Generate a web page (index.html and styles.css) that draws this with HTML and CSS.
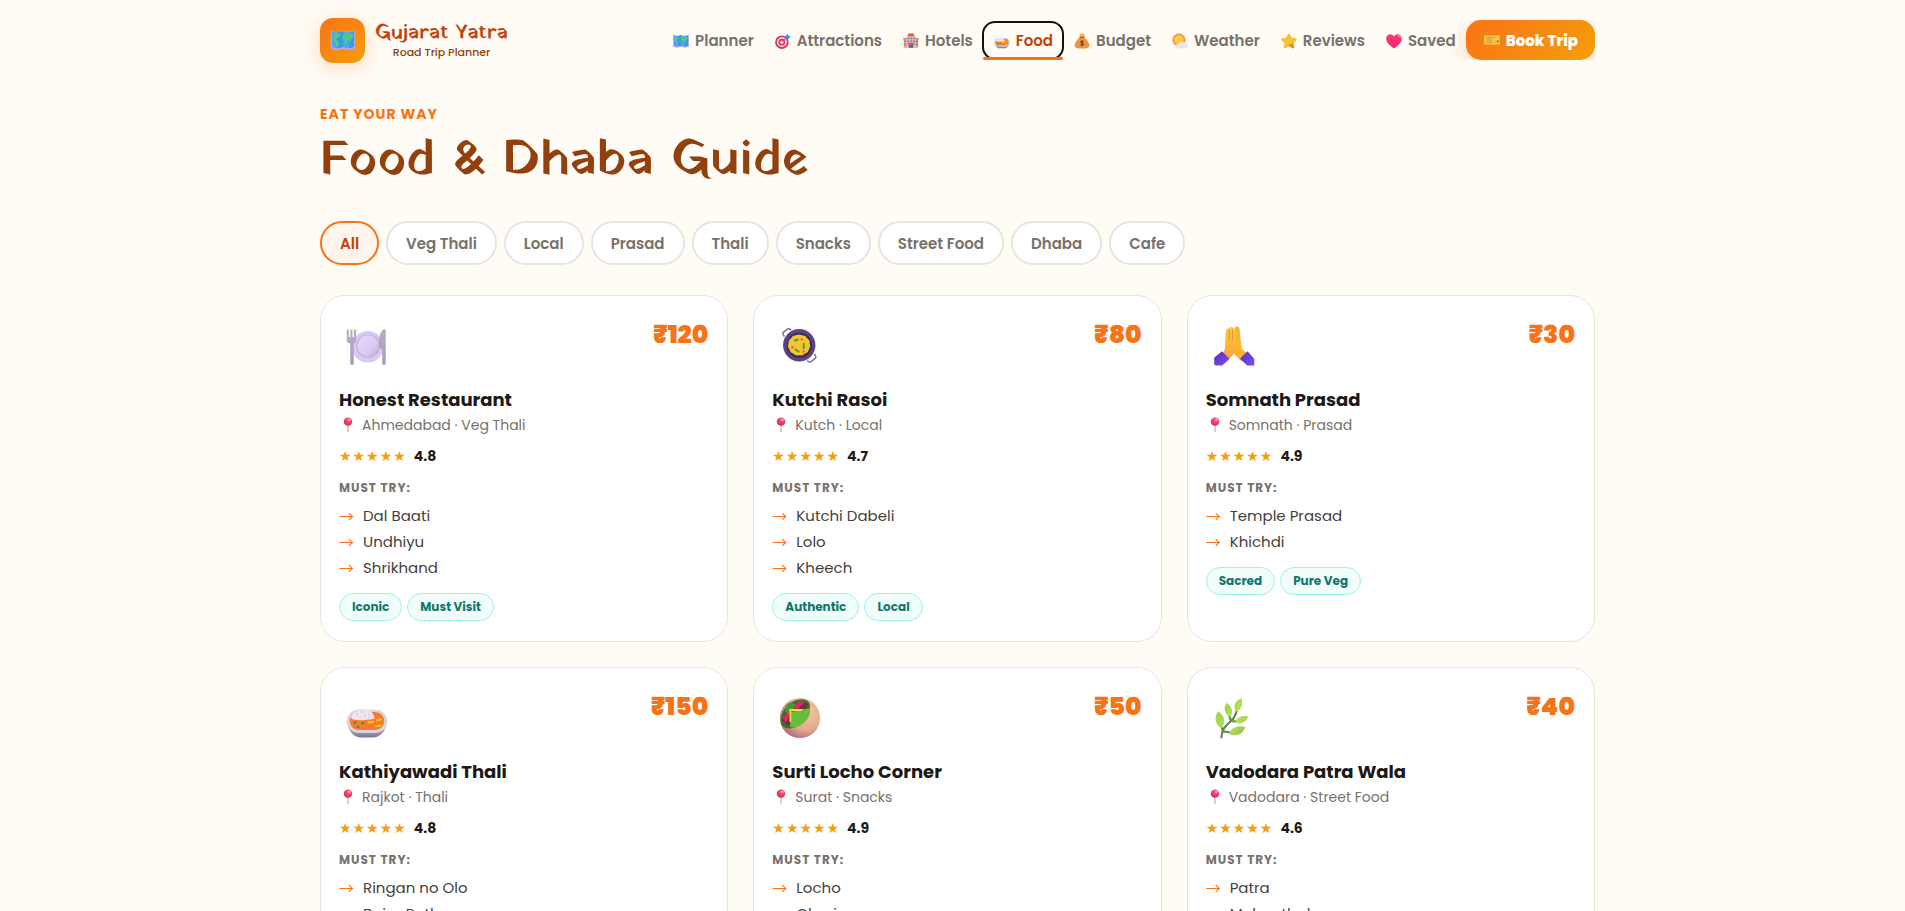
FILE: index.html
```html
<!DOCTYPE html>
<html lang="en">
<head>
    <meta charset="UTF-8">
    <meta name="viewport" content="width=device-width, initial-scale=1.0">
    <title>Gujarat Yatra</title>
    <link rel="stylesheet" href="styles.css">
</head>
<body>

    <!-- Icon sprite -->
    <svg class="sprite" aria-hidden="true">
        <defs>
            <linearGradient id="g-plate" x1="0" y1="0" x2="1" y2="1">
                <stop offset="0" stop-color="#eadcf8"/><stop offset=".6" stop-color="#d9cbf3"/><stop offset="1" stop-color="#b9afc9"/>
            </linearGradient>
            <linearGradient id="g-steel" x1="0" y1="0" x2="0" y2="1">
                <stop offset="0" stop-color="#b8afc0"/><stop offset="1" stop-color="#a99cc0"/>
            </linearGradient>
            <linearGradient id="g-hand" x1="0" y1="0" x2="0" y2="1">
                <stop offset="0" stop-color="#ffc93c"/><stop offset="1" stop-color="#ffa03a"/>
            </linearGradient>
            <linearGradient id="g-sleeve" x1="0" y1="0" x2="1" y2="1">
                <stop offset="0" stop-color="#5b2fb0"/><stop offset="1" stop-color="#7f4bff"/>
            </linearGradient>
            <linearGradient id="g-bowl" x1="0" y1="0" x2="0" y2="1">
                <stop offset="0" stop-color="#c9c0d2"/><stop offset="1" stop-color="#85719d"/>
            </linearGradient>
            <radialGradient id="g-bread" cx=".65" cy=".35" r=".8">
                <stop offset="0" stop-color="#f3c8a0"/><stop offset=".55" stop-color="#e2ad8b"/><stop offset="1" stop-color="#a4527a"/>
            </radialGradient>
            <linearGradient id="g-leaf" x1="0" y1="0" x2="1" y2="1">
                <stop offset="0" stop-color="#94cc3f"/><stop offset=".6" stop-color="#b9e35c"/><stop offset="1" stop-color="#93b94a"/>
            </linearGradient>
            <linearGradient id="g-heart" x1="0" y1="0" x2="0" y2="1">
                <stop offset="0" stop-color="#f23f6b"/><stop offset="1" stop-color="#ff1f78"/>
            </linearGradient>
            <radialGradient id="g-pin" cx=".6" cy=".3" r=".8">
                <stop offset="0" stop-color="#ff6f8e"/><stop offset=".5" stop-color="#f33a66"/><stop offset="1" stop-color="#c9205c"/>
            </radialGradient>
        </defs>
        <symbol id="i-map" viewBox="0 0 32 32">
            <path d="M2 5l7 2 7-2 7 2 7-2v21l-7 2-7-2-7 2-7-2z" fill="#b9a6d8"/>
            <path d="M3.500 6l5.500 1.600L16 6l7 1.600L28.500 6v18l-5.500 1.700L16 24l-7 1.700L3.500 24z" fill="#47a5f7"/>
            <path d="M9 7.600L16 6v18l-7 1.700zM23 7.600L28.500 6v18L23 25.700z" fill="#2d82dc" opacity=".4"/>
            <path d="M5 9l4-.5 4 .5-1 3-3 2-1.500 2 3 1 1 3-2 4-1.500-1-.5-4-2-2.500L4.500 12zM16 10l3-2 4 1 4-1 .5 4-2 3-1.500 4-2-3-1.500.500L19 21l-2-2-.5-3-1.500-1.500z" fill="#4cc985"/>
        </symbol>
        <symbol id="i-target" viewBox="0 0 32 32">
            <circle cx="14" cy="18" r="12" fill="#e2325f"/>
            <circle cx="14" cy="18" r="8.700" fill="#f5dfee"/>
            <circle cx="14" cy="18" r="6" fill="#dc3464"/>
            <circle cx="14" cy="18" r="3" fill="#f5dfee"/>
            <path d="M14 18L24 8" stroke="#5b6fa6" stroke-width="1.600"/>
            <path d="M20 8l5-5 1 4 4 1-5 5-4-1z" fill="#2b97ea"/>
        </symbol>
        <symbol id="i-hotel" viewBox="0 0 32 32">
            <path d="M3 12h26v16H3z" fill="#f9a08a"/>
            <path d="M8 6h16v22H8z" fill="#ffb49c"/>
            <path d="M11 2.500h10v5H11zM2 11h6v2H2zM24 11h6v2h-6z" fill="#d9573f"/>
            <path d="M10 10h3v3h-3zM15 10h3v3h-3zM20 10h3v3h-3zM10 15h3v3h-3zM15 15h3v3h-3zM20 15h3v3h-3zM4 15h3v3H4zM25 15h3v3h-3zM4 21h3v3H4zM25 21h3v3h-3z" fill="#2795d8"/>
            <path d="M12 22h8v6h-8z" fill="#3b6fb0"/>
            <path d="M10 19.500h12V22H10z" fill="#e0473b"/>
        </symbol>
        <symbol id="i-thali" viewBox="0 0 32 32">
            <path d="M3 19c0 5 4 10 9 10h8c5 0 9-5 9-10z" fill="url(#g-bowl)"/>
            <rect x="2.500" y="10.500" width="27" height="15.500" rx="7.700" fill="#d9d4dc"/>
            <rect x="4.500" y="12" width="23" height="12" rx="6" fill="#f97a2c"/>
            <path d="M5.500 15c1-2 2-3.500 4-3.600 2-2 6-2.500 8 0 2 .5 3.500 3 3.500 5-4 1.200-10 1.500-14 .6-1.500-.5-2-1-1.500-2z" fill="#eee5f2"/>
            <path d="M9 13.500h.8M12 12h.8M14 14.500h.8M17 13.500h.8M11 15.500h.8M17 15.500h.8" stroke="#b6a6bd" stroke-width=".7"/>
            <path d="M17 19l3-.5M22.500 17.500l2.800-.5M22 21.500l3-.5" stroke="#ffc62e" stroke-width="1.300" stroke-linecap="round"/>
            <circle cx="8" cy="19" r=".9" fill="#2b9b40"/>
            <circle cx="13" cy="19.500" r=".9" fill="#2b9b40"/>
            <circle cx="10" cy="22" r=".9" fill="#2b9b40"/>
        </symbol>
        <symbol id="i-money" viewBox="0 0 32 32">
            <path d="M11 3c2 1.500 3-.5 5-.5S19 4.500 21 3l-2 6h-6z" fill="#f7b24a"/>
            <path d="M12 10c-5 3-9 9-9 14 0 4 4 5.500 13 5.500S29 28 29 24c0-5-4-11-9-14z" fill="#f0953a"/>
            <rect x="11" y="8" width="10" height="3" rx="1.500" fill="#c9582f"/>
            <path d="M19 17c-1.500-1.300-5.500-1.300-5.500 1 0 2.600 5.800 1.200 5.800 3.800 0 2.400-4.300 2.400-6.300.8M16 15v10.500" stroke="#5c3a1d" stroke-width="1.600" fill="none"/>
        </symbol>
        <symbol id="i-weather" viewBox="0 0 32 32">
            <circle cx="14" cy="14" r="11" fill="#f7913d" stroke="#f7913d" stroke-width="1.500" stroke-dasharray="3 2"/>
            <circle cx="14" cy="14" r="8.500" fill="#ffc83d"/>
            <path d="M13 29.500c-6 0-6-8 0-8 1-5 9-6 11-1 7-2 8 8 2 9z" fill="#e9e3f2"/>
        </symbol>
        <symbol id="i-star" viewBox="0 0 32 32">
            <path d="M16 2.500c1 0 1.500.8 2 1.800l3 6 7 1c2 .4 2.500 2 1 3.500l-5 5 1.300 7c.3 2-1.300 2.800-3 2L16 25.500l-6.300 3.300c-1.700.8-3.300 0-3-2l1.300-7-5-5c-1.500-1.500-1-3.100 1-3.500l7-1 3-6c.5-1 1-1.800 2-1.800z" fill="#f5c334"/>
            <path d="M16 25.500l6.300 3.300c1.700.8 3.300 0 3-2l-1.300-7-8 2z" fill="#d99a35"/>
        </symbol>
        <symbol id="i-heart" viewBox="0 0 32 32">
            <path d="M16 29C10 25 2 19 2 11.500 2 4 12 1 16 8c4-7 14-4 14 3.500C30 19 22 25 16 29z" fill="url(#g-heart)"/>
            <path d="M23 6c3 0 4.500 2.500 4 5" stroke="#ff8aa5" stroke-width="2" fill="none" stroke-linecap="round"/>
        </symbol>
        <symbol id="i-ticket" viewBox="0 0 32 32">
            <path d="M2 8h28v4c-1.500 0-1.500 2 0 2v2c-1.500 0-1.500 2 0 2v6H2z" fill="#f7c948"/>
            <path d="M6 12h13M6 16h9M6 20h12" stroke="#c48a2c" stroke-width="1.600"/>
            <path d="M22 9v14" stroke="#e8a233" stroke-width="1.500" stroke-dasharray="2 1.500"/>
            <path d="M24.500 17h3v3h-3z" fill="#8b5a2b"/>
        </symbol>
        <symbol id="i-pin" viewBox="0 0 32 32">
            <path d="M15 14h2v13l-1 3-1-3z" fill="#b7aabb"/>
            <circle cx="16" cy="10" r="7.500" fill="url(#g-pin)"/>
            <ellipse cx="18.500" cy="7" rx="2" ry="1.500" fill="#ffc0cf"/>
        </symbol>
        <symbol id="i-plate" viewBox="0 0 32 32">
            <circle cx="16.500" cy="16.500" r="10.500" fill="#d8c9f2"/>
            <circle cx="16.800" cy="16" r="7.500" fill="url(#g-plate)" stroke="#bfb2d8" stroke-width=".8"/>
            <path d="M2.500 5h1.400v5h1V5h1.400v5h1V5h1.400v7c0 1.300-.6 2-1.500 2.500V27.500c0 1.500-2.400 1.500-2.400 0V14.500C3.100 14 2.500 13.300 2.500 12z" fill="url(#g-steel)"/>
            <path d="M28.500 6v21.500c0 1.500-2.400 1.500-2.400 0V18c-1.600-.3-2.400-1-2.300-2.500C23.900 10 25 6 27 5c.8-.3 1.500.2 1.500 1z" fill="url(#g-steel)"/>
        </symbol>
        <symbol id="i-kadai" viewBox="0 0 32 32">
            <path d="M5.600 9.800l-.9-1.500c-.3-.6-.2-1 .2-1.400L7.700 4.700c.5-.4 1-.4 1.500 0l1 .8M20.800 25.700l1 .8c.5.4 1 .4 1.500 0l2.900-2.400c.4-.4.5-.8.2-1.400l-.8-1.500" stroke="#7e6ba3" stroke-width="1" fill="none"/>
            <circle cx="15.500" cy="15.500" r="10.800" fill="#5d4488"/>
            <circle cx="15.500" cy="15.500" r="8.400" fill="#392c4e"/>
            <path d="M15.500 8.300l2 .5 2 .5 1.300 1.600 1.500 1.400.2 2.100.4 2-1 1.900-.8 1.900-1.900.9-1.700 1.200-2.100-.2-2.100.2-1.700-1.200-1.900-.9-.8-1.900-1-1.900.4-2 .2-2.100 1.500-1.400 1.300-1.600 2-.5z" fill="#f5c52f"/>
            <path d="M12 12.500l3-.9M18.500 14v4M12.500 18l3 2M14 13" stroke="#45a33d" stroke-width="1.300"/>
            <path d="M16.500 11h1.300v1.200h-1.300zM10.300 16h1.200v1.600h-1.200zM17.800 19h1.200v1.500h-1.200z" fill="#e9503a"/>
        </symbol>
        <symbol id="i-pray" viewBox="0 0 32 32">
            <path d="M16.500 3.800c1.500-1.600 3.200-.6 3.200 1.200L21 17.500l4 4-4.500 4.500-4.500-5z" fill="#ffb02e"/>
            <path d="M10.500 7c0-2 1-3 2.200-2.800.8-1.300 3.300-1.200 3.600.5.9.4 1.200 1.100 1.200 2.100v12.700L12 25.500l-3.500-4.500 1.500-3z" fill="url(#g-hand)"/>
            <path d="M12.800 5v7M15 5v7" stroke="#e8912a" stroke-width=".6"/>
            <path d="M8 19.500l5 5-4.800 4.500H4a1.200 1.200 0 0 1-1.200-1.200v-4z" fill="url(#g-sleeve)"/>
            <path d="M25 19.500l-5 5 4.800 4.500H29.500v-4.500z" fill="url(#g-sleeve)"/>
        </symbol>
        <symbol id="i-wrap" viewBox="0 0 32 32">
            <circle cx="16" cy="16" r="13.400" fill="url(#g-bread)"/>
            <path d="M4 21C1.500 16 5.500 6 14 4c6-1.500 9.500 1 8.500 6C21 17 14 23.500 9 23c-2.500-.2-4-.8-5-2z" fill="#397526"/>
            <path d="M4.500 18c0-4 3-8 6-10l5-3.500 6 2-2 6-6 6-6 2.500z" fill="#71333d"/>
            <path d="M11.500 8.500l4-4 3.500 1-5 5zM4.500 16l3.500-4.500 2 1.500-3.500 6z" fill="#d62a60"/>
            <path d="M6 11c0-4.500 4-6.500 7-4l-1.500 4-4 2z" fill="#4b9633"/>
            <path d="M9.500 12l13-2.500c1 5-2 8.500-5 10.500s-5 3-8 2z" fill="#69bd3e"/>
            <path d="M9 18.500V10h9.500l-2 1.300h-6.300v7.200z" fill="#f8df35"/>
        </symbol>
        <symbol id="i-herb" viewBox="0 0 32 32">
            <path d="M7.500 29.500c.5-8 5-9.500 8-13 2-3 2.500-5 3-8M8.500 24.500L6.500 18M14 18l-2-6M15 18.500l5-1M9 25l6 .8" stroke="#5d8748" stroke-width="1.400" fill="none"/>
            <path d="M21 2.700c-4.500 2-6 5.500-3.500 9 4-1.500 4.500-5 3.500-9zM11 6c-2.500 3.500-1 7.500 2.500 9.500 2.500-3.500 1-7.500-2.500-9.500zM5.500 11.500c-3 4-2 8.500 2 11.500 3.500-4 2-9-2-11.500zM25.500 15c-4.500-1-7.500.5-9 4 4 1.500 7.500 0 9-4zM23.500 22c-4.500-1.300-9 0-11 4.500 4.500 2.500 9.500.5 11-4.500z" fill="url(#g-leaf)"/>
        </symbol>
    </svg>

    <header class="header">
        <div class="container header-inner">
            <div class="logo">
                <div class="logo-icon"><svg><use href="#i-map"/></svg></div>
                <div class="logo-text">
                    <span class="logo-name">Gujarat Yatra</span>
                    <span class="logo-sub">Road Trip Planner</span>
                </div>
            </div>
            <nav class="nav">
                <a class="nav-link" href="#planner"><svg class="icon"><use href="#i-map"/></svg>Planner</a>
                <a class="nav-link" href="#attractions"><svg class="icon"><use href="#i-target"/></svg>Attractions</a>
                <a class="nav-link" href="#hotels"><svg class="icon"><use href="#i-hotel"/></svg>Hotels</a>
                <a class="nav-link active" href="#food"><svg class="icon"><use href="#i-thali"/></svg>Food</a>
                <a class="nav-link" href="#budget"><svg class="icon"><use href="#i-money"/></svg>Budget</a>
                <a class="nav-link" href="#weather"><svg class="icon"><use href="#i-weather"/></svg>Weather</a>
                <a class="nav-link" href="#reviews"><svg class="icon"><use href="#i-star"/></svg>Reviews</a>
                <a class="nav-link" href="#saved"><svg class="icon"><use href="#i-heart"/></svg>Saved</a>
                <button class="book-button" type="button"><svg class="icon"><use href="#i-ticket"/></svg>Book Trip</button>
            </nav>
        </div>
    </header>

    <main class="container main" id="food">
        <p class="eyebrow">EAT YOUR WAY</p>
        <h1>Food &amp; Dhaba Guide</h1>

        <!-- Filters -->
        <div class="filters">
            <button class="chip active" type="button">All</button>
            <button class="chip" type="button">Veg Thali</button>
            <button class="chip" type="button">Local</button>
            <button class="chip" type="button">Prasad</button>
            <button class="chip" type="button">Thali</button>
            <button class="chip" type="button">Snacks</button>
            <button class="chip" type="button">Street Food</button>
            <button class="chip" type="button">Dhaba</button>
            <button class="chip" type="button">Cafe</button>
        </div>

        <!-- Food cards -->
        <div class="food-grid">
            <article class="card">
                <div class="card-top">
                    <div class="food-icon"><svg><use href="#i-plate"/></svg></div>
                    <span class="price">₹120</span>
                </div>
                <h2>Honest Restaurant</h2>
                <p class="place"><svg class="icon"><use href="#i-pin"/></svg>Ahmedabad · Veg Thali</p>
                <p class="rating"><span class="stars">★★★★★</span>4.8</p>
                <h3>MUST TRY:</h3>
                <ul class="dishes">
                    <li>Dal Baati</li>
                    <li>Undhiyu</li>
                    <li>Shrikhand</li>
                </ul>
                <div class="tags">
                    <span class="tag">Iconic</span>
                    <span class="tag">Must Visit</span>
                </div>
            </article>

            <article class="card">
                <div class="card-top">
                    <div class="food-icon"><svg><use href="#i-kadai"/></svg></div>
                    <span class="price">₹80</span>
                </div>
                <h2>Kutchi Rasoi</h2>
                <p class="place"><svg class="icon"><use href="#i-pin"/></svg>Kutch · Local</p>
                <p class="rating"><span class="stars">★★★★★</span>4.7</p>
                <h3>MUST TRY:</h3>
                <ul class="dishes">
                    <li>Kutchi Dabeli</li>
                    <li>Lolo</li>
                    <li>Kheech</li>
                </ul>
                <div class="tags">
                    <span class="tag">Authentic</span>
                    <span class="tag">Local</span>
                </div>
            </article>

            <article class="card">
                <div class="card-top">
                    <div class="food-icon"><svg><use href="#i-pray"/></svg></div>
                    <span class="price">₹30</span>
                </div>
                <h2>Somnath Prasad</h2>
                <p class="place"><svg class="icon"><use href="#i-pin"/></svg>Somnath · Prasad</p>
                <p class="rating"><span class="stars">★★★★★</span>4.9</p>
                <h3>MUST TRY:</h3>
                <ul class="dishes">
                    <li>Temple Prasad</li>
                    <li>Khichdi</li>
                </ul>
                <div class="tags">
                    <span class="tag">Sacred</span>
                    <span class="tag">Pure Veg</span>
                </div>
            </article>

            <article class="card">
                <div class="card-top">
                    <div class="food-icon"><svg><use href="#i-thali"/></svg></div>
                    <span class="price">₹150</span>
                </div>
                <h2>Kathiyawadi Thali</h2>
                <p class="place"><svg class="icon"><use href="#i-pin"/></svg>Rajkot · Thali</p>
                <p class="rating"><span class="stars">★★★★★</span>4.8</p>
                <h3>MUST TRY:</h3>
                <ul class="dishes">
                    <li>Ringan no Olo</li>
                    <li>Bajra Rotla</li>
                </ul>
            </article>

            <article class="card">
                <div class="card-top">
                    <div class="food-icon"><svg><use href="#i-wrap"/></svg></div>
                    <span class="price">₹50</span>
                </div>
                <h2>Surti Locho Corner</h2>
                <p class="place"><svg class="icon"><use href="#i-pin"/></svg>Surat · Snacks</p>
                <p class="rating"><span class="stars">★★★★★</span>4.9</p>
                <h3>MUST TRY:</h3>
                <ul class="dishes">
                    <li>Locho</li>
                    <li>Ghari</li>
                </ul>
            </article>

            <article class="card">
                <div class="card-top">
                    <div class="food-icon"><svg><use href="#i-herb"/></svg></div>
                    <span class="price">₹40</span>
                </div>
                <h2>Vadodara Patra Wala</h2>
                <p class="place"><svg class="icon"><use href="#i-pin"/></svg>Vadodara · Street Food</p>
                <p class="rating"><span class="stars">★★★★★</span>4.6</p>
                <h3>MUST TRY:</h3>
                <ul class="dishes">
                    <li>Patra</li>
                    <li>Mohanthal</li>
                </ul>
            </article>
        </div>
    </main>

</body>
</html>
```

FILE: styles.css
```css
* {
    box-sizing: border-box;
    margin: 0;
    padding: 0;
}

body {
    font-family: Poppins, Inter, sans-serif;
    background: #fffcf5;
    color: #1c1917;
    padding-left: 10px;
}

.sprite {
    position: absolute;
    width: 0;
    height: 0;
}

.container {
    width: 100%;
    max-width: 1275px;
    margin: 0 auto;
}

.icon {
    width: 18px;
    height: 18px;
    flex-shrink: 0;
}

/* Header */
.header {
    height: 80px;
    overflow: hidden;
}

.header-inner {
    height: 100%;
    display: flex;
    justify-content: space-between;
    align-items: center;
}

.logo {
    display: flex;
    align-items: center;
    gap: 10px;
}

.logo-icon {
    width: 45px;
    height: 45px;
    border-radius: 13px;
    background: linear-gradient(135deg, #f97316, #f59e0b);
    box-shadow: 0 4px 20px rgba(249, 115, 22, 0.25);
    display: flex;
    align-items: center;
    justify-content: center;
}

.logo-icon svg {
    width: 28px;
    height: 28px;
}

.logo-text {
    display: flex;
    flex-direction: column;
    align-items: center;
}

.logo-name {
    font-family: "Yatra One", Poppins, Inter, sans-serif;
    font-size: 20px;
    font-weight: 400;
    line-height: 23px;
    color: #c2410c;
}

.logo-sub {
    font-size: 11px;
    font-weight: 500;
    line-height: 14px;
    color: #92400e;
}

.nav {
    display: flex;
    align-items: flex-end;
    height: 40px;
    overflow: hidden;
}

.nav-link {
    position: relative;
    display: flex;
    align-items: center;
    gap: 5px;
    margin-bottom: 1px;
    padding: 8px 10px 7px;
    border-radius: 12px;
    font-size: 15px;
    font-weight: 600;
    line-height: 22px;
    color: #78716c;
    text-decoration: none;
}

.nav-link.active {
    color: #c2410c;
    outline: 2px solid #111;
    outline-offset: -1px;
}

.nav-link.active::after {
    content: "";
    position: absolute;
    left: 0;
    right: 0;
    bottom: -1px;
    z-index: 1;
    height: 3px;
    border-radius: 2px;
    background: #f97316;
}

.book-button {
    display: flex;
    align-items: center;
    gap: 5px;
    height: 40px;
    padding: 0 17px;
    border: none;
    border-radius: 15px;
    background: linear-gradient(135deg, #f97316, #f59e0b);
    box-shadow: 0 4px 20px rgba(249, 115, 22, 0.3);
    color: white;
    font-family: inherit;
    font-size: 15px;
    font-weight: 800;
    cursor: pointer;
}

/* Page heading */
.main {
    padding: 24px 0 60px;
}

.eyebrow {
    font-size: 14px;
    font-weight: 700;
    line-height: 20px;
    letter-spacing: 1px;
    color: #f97316;
}

h1 {
    margin: 7px 0 30px;
    font-family: "Yatra One", Poppins, Inter, sans-serif;
    font-size: 49px;
    font-weight: 400;
    line-height: 60px;
    color: #92400e;
}

/* Filters */
.filters {
    display: flex;
    flex-wrap: wrap;
    gap: 7px;
    margin-bottom: 30px;
}

.chip {
    height: 44px;
    padding: 0 18px;
    border: 2px solid #e7e5e4;
    border-radius: 22px;
    background: white;
    color: #78716c;
    font-family: inherit;
    font-size: 15px;
    font-weight: 600;
    cursor: pointer;
}

.chip.active {
    border-color: #f97316;
    background: #fff5ed;
    color: #c2410c;
}

/* Food cards */
.food-grid {
    display: grid;
    grid-template-columns: repeat(3, 1fr);
    gap: 25px;
}

.card {
    padding: 18px 19px 20px 18px;
    border: 1px solid #e7e5e4;
    border-radius: 25px;
    background: white;
}

.card-top {
    display: flex;
    justify-content: space-between;
}

.food-icon {
    width: 56px;
    height: 64px;
    display: flex;
    align-items: center;
    justify-content: center;
}

.food-icon svg {
    width: 48px;
    height: 48px;
}

.price {
    font-size: 25px;
    font-weight: 900;
    line-height: 42px;
    color: #f97316;
}

.card h2 {
    margin-top: 8px;
    font-size: 18px;
    font-weight: 700;
    line-height: 27px;
}

.place {
    display: flex;
    align-items: center;
    gap: 5px;
    margin-top: 2px;
    font-size: 14px;
    line-height: 20px;
    color: #78716c;
}

.rating {
    display: flex;
    align-items: center;
    gap: 7px;
    margin-top: 11px;
    font-size: 14px;
    font-weight: 700;
    line-height: 20px;
}

.stars {
    font-family: "DejaVu Sans", sans-serif;
    font-weight: 400;
    letter-spacing: 1px;
    color: #f59e0b;
}

.card h3 {
    margin-top: 13px;
    font-size: 12px;
    font-weight: 700;
    line-height: 18px;
    letter-spacing: 1px;
    color: #78716c;
}

.dishes {
    margin-top: 6px;
    list-style: none;
}

.dishes li {
    display: flex;
    gap: 9px;
    font-size: 15px;
    line-height: 26px;
    color: #44403c;
}

.dishes li::before {
    content: "→";
    font-family: "Noto Sans CJK JP", sans-serif;
    color: #f97316;
}

.tags {
    display: flex;
    gap: 5px;
    margin-top: 12px;
}

.tag {
    padding: 0 12px;
    border: 1px solid #99f6e4;
    border-radius: 14px;
    background: #f0fdfa;
    color: #0f766e;
    font-size: 12px;
    font-weight: 700;
    line-height: 26px;
}
```
